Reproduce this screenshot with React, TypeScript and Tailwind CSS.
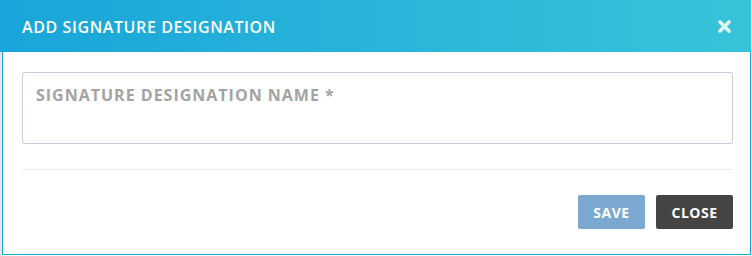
export default function App() {
  return (
    <div
      className="w-[752px] h-[256px] bg-white overflow-hidden"
      style={{ fontFamily: '"Open Sans", "Liberation Sans", sans-serif' }}
    >
      {/* Header */}
      <div className="w-[751px] h-[52px] flex items-center justify-between pl-[22px] pr-[20px] pt-[1px] bg-gradient-to-r from-[#18a5d9] to-[#36c4da]">
        <h2 className="text-[16px] font-semibold tracking-[0.6px] text-white leading-none">
          ADD SIGNATURE DESIGNATION
        </h2>
        <button className="text-white/85">
          <svg width="13" height="13" viewBox="0 0 13 13">
            <path d="M2 2 L11 11 M11 2 L2 11" stroke="currentColor" strokeWidth="3.6" strokeLinecap="round" />
          </svg>
        </button>
      </div>

      {/* Body */}
      <div className="flex h-[203px]">
        <div className="w-[2px] bg-[#e6e6e6]" />
        <div className="w-[749px] border-x border-b border-[#17a6d8] pl-[19px] pr-[17px] pt-[20px]">
          <div className="h-[72px] border border-[#c8cdda] rounded-[2px] px-[13px] pt-[10px]">
            <span className="text-[16px] font-bold text-[#a3a3a3] tracking-[1px]">
              SIGNATURE DESIGNATION NAME *
            </span>
          </div>
          <div className="mt-[25px] border-t border-[#ececec]" />
          <div className="flex justify-end gap-[11px] mt-[25px]">
            <button className="w-[67px] h-[34px] rounded-[2px] bg-[#7ba8d1] text-white text-[14px] font-bold tracking-[0.5px]">
              SAVE
            </button>
            <button className="w-[77px] h-[34px] rounded-[2px] bg-[#444444] text-white text-[14px] font-bold tracking-[0.5px]">
              CLOSE
            </button>
          </div>
        </div>
      </div>
    </div>
  )
}
